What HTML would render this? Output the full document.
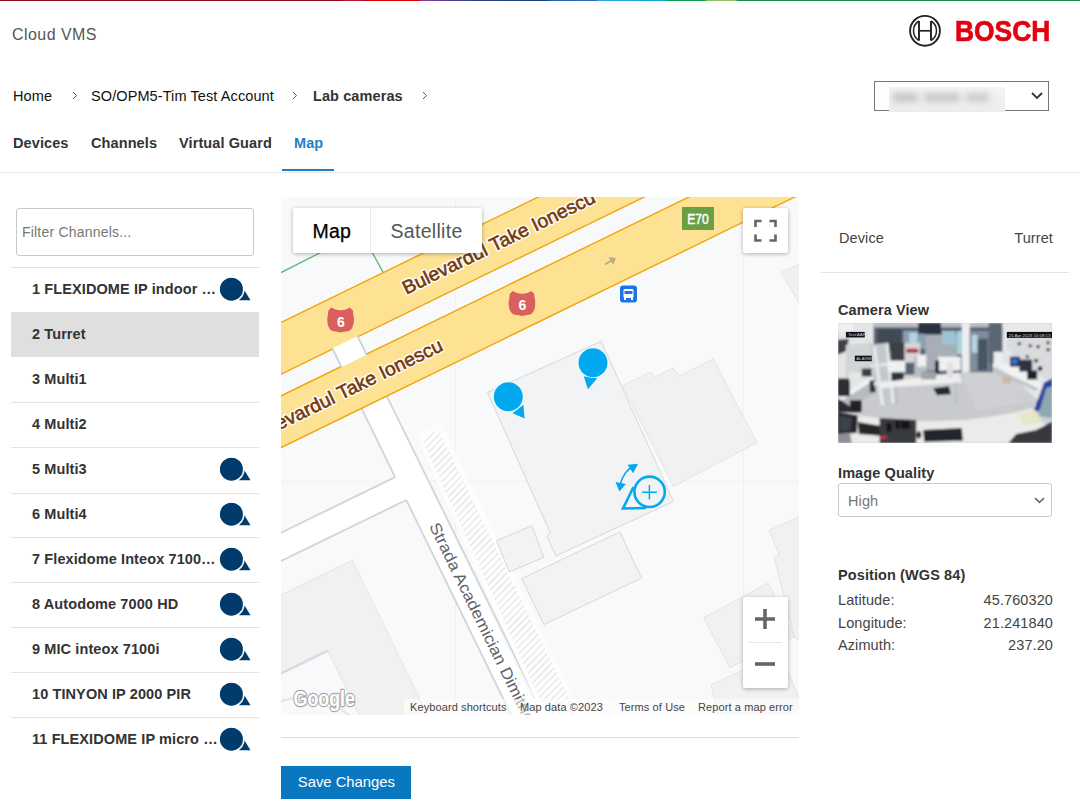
<!DOCTYPE html>
<html><head><meta charset="utf-8">
<style>
*{box-sizing:border-box;margin:0;padding:0}
html,body{width:1080px;height:811px;overflow:hidden;background:#fff;font-family:"Liberation Sans",sans-serif;color:#333;position:relative}
.abs{position:absolute;white-space:nowrap}
#topbar{position:absolute;left:0;top:0;width:1080px;height:1px;background:linear-gradient(90deg,#8a0b1d 0,#8a0b1d 342px,#b5162e 342px,#b5162e 363px,#a80c10 364px,#a80c10 367px,#d50005 368px,#d50005 419px,#8b3d98 421px,#4b3f92 450px,#27408c 480px,#173d80 546px,#2462ae 552px,#2a70b8 596px,#31a6dc 598px,#2aa6dc 636px,#0aa2d6 640px,#18a7d0 665px,#109a4c 668px,#109a4c 705px,#8fc65a 707px,#8fc65a 735px,#1d8d45 738px,#1d8d45 1080px)}
.crumb{font-size:14.5px;color:#111;top:88px;letter-spacing:0.1px}
.chev{position:absolute;width:6px;height:9px;top:91px}
.tab{font-size:14.5px;font-weight:bold;color:#333;top:135px;letter-spacing:0.1px}
#filter{position:absolute;left:16px;top:208px;width:238px;height:48px;border:1px solid #c8c8c8;border-radius:3px;font-size:14px;color:#777;padding:15px 0 0 5px;letter-spacing:0.2px}
.hl{position:absolute;left:11px;width:248px;height:1px;background:#e3e3e3}
.rt{position:absolute;left:32px;font-size:14.5px;font-weight:bold;color:#333;white-space:nowrap;letter-spacing:0.1px}
.ico{position:absolute;left:219px;width:32px;height:24px}
.lbl{position:absolute;font-size:14.5px;color:#444;white-space:nowrap;letter-spacing:0.1px}
.hd{position:absolute;font-size:14.5px;font-weight:bold;color:#333;white-space:nowrap;letter-spacing:0.1px}
.rv{position:absolute;right:27px;font-size:14.5px;color:#444;white-space:nowrap;letter-spacing:0.1px}
#map{position:absolute;left:281px;top:197px;width:518px;height:518px;overflow:hidden;background:#f8f9fa}
.mt{position:absolute;font-family:"Liberation Sans",sans-serif;white-space:nowrap}
.att{position:absolute;top:701px;font-size:11px;color:#444;white-space:nowrap}
</style></head>
<body>
<div id="topbar"></div>
<div class="abs" style="left:12px;top:26px;font-size:16px;color:#555;letter-spacing:0.45px">Cloud VMS</div>
<!-- bosch logo -->
<svg class="abs" style="left:905px;top:12px" width="40" height="40" viewBox="905 12 40 40">
<circle cx="925" cy="30.8" r="14.9" fill="none" stroke="#222" stroke-width="1.9"/>
<path d="M919 21 A11.5 11.5 0 0 0 919 40.6 M931 21 A11.5 11.5 0 0 1 931 40.6" fill="none" stroke="#222" stroke-width="1.5"/>
<path d="M919 21 V40.6 M931 21 V40.6" stroke="#222" stroke-width="1.9"/>
<path d="M919 30.8 H931" stroke="#222" stroke-width="1.7"/>
</svg>
<div class="abs" style="left:955px;top:13.5px;font-size:29.5px;font-weight:bold;color:#e3000f;transform:scaleX(0.895);transform-origin:0 0;-webkit-text-stroke:0.7px #e3000f">BOSCH</div>

<!-- breadcrumb -->
<div class="abs crumb" style="left:13px">Home</div>
<svg class="chev" style="left:72px"><polyline points="1,1 4.5,4.5 1,8" fill="none" stroke="#555" stroke-width="1"/></svg>
<div class="abs crumb" style="left:91px">SO/OPM5-Tim Test Account</div>
<svg class="chev" style="left:292px"><polyline points="1,1 4.5,4.5 1,8" fill="none" stroke="#555" stroke-width="1"/></svg>
<div class="abs crumb" style="left:313px;font-weight:bold;color:#333">Lab cameras</div>
<svg class="chev" style="left:422px"><polyline points="1,1 4.5,4.5 1,8" fill="none" stroke="#555" stroke-width="1"/></svg>

<!-- account select -->
<div class="abs" style="left:874px;top:81px;width:175px;height:30px;border:1px solid #777"></div>
<div class="abs" style="left:889px;top:87px;width:116px;height:25px;background:linear-gradient(180deg,#f4f4f4,#ececec)"></div>
<div class="abs" style="left:893px;top:93px;width:25px;height:9px;background:#c8c4c4;filter:blur(3px)"></div>
<div class="abs" style="left:924px;top:93px;width:36px;height:9px;background:#c5cac4;filter:blur(3px)"></div>
<div class="abs" style="left:966px;top:93px;width:23px;height:9px;background:#cbccd0;filter:blur(3px)"></div>
<svg class="abs" style="left:1030px;top:91px" width="14" height="10"><polyline points="2,2 7,7 12,2" fill="none" stroke="#333" stroke-width="1.8"/></svg>

<!-- tabs -->
<div class="abs tab" style="left:13px">Devices</div>
<div class="abs tab" style="left:91px">Channels</div>
<div class="abs tab" style="left:179px">Virtual Guard</div>
<div class="abs tab" style="left:294px;color:#1f7fc4">Map</div>
<div class="abs" style="left:282px;top:169px;width:52px;height:2px;background:#1f7fc4"></div>
<div class="abs" style="left:0;top:172px;width:1080px;height:1px;background:#e8e8e8"></div>

<!-- left list -->
<div id="filter">Filter Channels...</div>
<div class="abs" style="left:11px;top:312px;width:248px;height:45px;background:#dfdfdf"></div>
<div class="hl" style="top:267px"></div>
<div class="hl" style="top:402px"></div>
<div class="hl" style="top:447px"></div>
<div class="hl" style="top:493px"></div>
<div class="hl" style="top:537px"></div>
<div class="hl" style="top:582px"></div>
<div class="hl" style="top:627px"></div>
<div class="hl" style="top:672px"></div>
<div class="hl" style="top:717px"></div>
<div class="rt" style="top:281px">1 FLEXIDOME IP indoor …</div>
<div class="rt" style="top:326px">2 Turret</div>
<div class="rt" style="top:371px">3 Multi1</div>
<div class="rt" style="top:416px">4 Multi2</div>
<div class="rt" style="top:461px">5 Multi3</div>
<div class="rt" style="top:506px">6 Multi4</div>
<div class="rt" style="top:551px">7 Flexidome Inteox 7100…</div>
<div class="rt" style="top:596px">8 Autodome 7000 HD</div>
<div class="rt" style="top:641px">9 MIC inteox 7100i</div>
<div class="rt" style="top:686px">10 TINYON IP 2000 PIR</div>
<div class="rt" style="top:731px">11 FLEXIDOME IP micro …</div>
<svg class="abs" style="left:0;top:0" width="280" height="811">
<circle cx="231.4" cy="289.2" r="11.5" fill="#003b6b"/>
<polygon points="244.4,290.3 250.5,300.3 238.8,300.3" fill="#003b6b"/>
<circle cx="231.4" cy="289.2" r="12.6" fill="none" stroke="#fff" stroke-width="1.2"/>
<circle cx="231.4" cy="469.2" r="11.5" fill="#003b6b"/>
<polygon points="244.4,470.3 250.5,480.3 238.8,480.3" fill="#003b6b"/>
<circle cx="231.4" cy="469.2" r="12.6" fill="none" stroke="#fff" stroke-width="1.2"/>
<circle cx="231.4" cy="514.2" r="11.5" fill="#003b6b"/>
<polygon points="244.4,515.3 250.5,525.3 238.8,525.3" fill="#003b6b"/>
<circle cx="231.4" cy="514.2" r="12.6" fill="none" stroke="#fff" stroke-width="1.2"/>
<circle cx="231.4" cy="559.2" r="11.5" fill="#003b6b"/>
<polygon points="244.4,560.3 250.5,570.3 238.8,570.3" fill="#003b6b"/>
<circle cx="231.4" cy="559.2" r="12.6" fill="none" stroke="#fff" stroke-width="1.2"/>
<circle cx="231.4" cy="604.2" r="11.5" fill="#003b6b"/>
<polygon points="244.4,605.3 250.5,615.3 238.8,615.3" fill="#003b6b"/>
<circle cx="231.4" cy="604.2" r="12.6" fill="none" stroke="#fff" stroke-width="1.2"/>
<circle cx="231.4" cy="649.2" r="11.5" fill="#003b6b"/>
<polygon points="244.4,650.3 250.5,660.3 238.8,660.3" fill="#003b6b"/>
<circle cx="231.4" cy="649.2" r="12.6" fill="none" stroke="#fff" stroke-width="1.2"/>
<circle cx="231.4" cy="694.2" r="11.5" fill="#003b6b"/>
<polygon points="244.4,695.3 250.5,705.3 238.8,705.3" fill="#003b6b"/>
<circle cx="231.4" cy="694.2" r="12.6" fill="none" stroke="#fff" stroke-width="1.2"/>
<circle cx="231.4" cy="739.2" r="11.5" fill="#003b6b"/>
<polygon points="244.4,740.3 250.5,750.3 238.8,750.3" fill="#003b6b"/>
<circle cx="231.4" cy="739.2" r="12.6" fill="none" stroke="#fff" stroke-width="1.2"/>
</svg>

<!-- map -->
<div id="map">
<svg width="518" height="518" viewBox="281 197 518 518" style="position:absolute;left:0;top:0">
<rect x="281" y="197" width="518" height="518" fill="#f8f9fa"/>
<line x1="455.5" y1="197" x2="455.5" y2="715" stroke="#f0f1f3" stroke-width="1"/>
<line x1="281" y1="481.5" x2="799" y2="481.5" stroke="#f1f2f4" stroke-width="1"/>
<line x1="743.5" y1="197" x2="743.5" y2="715" stroke="#f0f1f3" stroke-width="1"/>
<polygon points="18.81000069746284,722.9178265015752 352.2625918744538,560.2821310428275 546.022638755226,957.5490995070593 212.57004757823506,1120.184794965807" fill="#f1f1f1" stroke="#e2e2e2" stroke-width="0.9"/>
<polygon points="49.36446962866154,785.5637715286272 327.54122695825373,649.8879015974077 490.74680490782725,984.5089250345875 212.57004757823506,1120.184794965807" fill="#f8f9fa" stroke="#e0e0e0" stroke-width="0.9"/>
<line x1="49.7" y1="786.3" x2="327.9" y2="650.6" stroke="#dadce0" stroke-width="2.6"/>
<path d="M281,701 Q320,690 350,716" fill="none" stroke="#e2e3e5" stroke-width="2"/>
<polygon points="-5.738783522725498,672.5853599088218 407.7064777748913,470.9346323858462 418.8849420180128,493.85388056647497 5.439680720395984,695.5046080894506" fill="#fff"/>
<line x1="-5.7" y1="672.6" x2="395.1" y2="477.1" stroke="#d2d4d8" stroke-width="1.8"/>
<line x1="5.4" y1="695.5" x2="406.3" y2="500.0" stroke="#d2d4d8" stroke-width="1.8"/>
<polygon points="359.1769270899986,403.37071664436155 384.3431603863753,391.0963245342674 635.0032493388435,914.1503559749406 613.4321922276636,924.6712634978785" fill="#fff"/>
<line x1="361.4" y1="407.9" x2="395.1" y2="477.1" stroke="#d2d4d8" stroke-width="1.8"/>
<line x1="406.3" y1="500.0" x2="613.4" y2="924.7" stroke="#d2d4d8" stroke-width="1.8"/>
<line x1="386.5" y1="395.6" x2="640.4" y2="911.5" stroke="#d2d4d8" stroke-width="1.8"/>
<defs><pattern id="hatch" patternUnits="userSpaceOnUse" width="20" height="5" patternTransform="rotate(-46)"><line x1="0" y1="2.5" x2="20" y2="2.5" stroke="#dfe0e2" stroke-width="1.1"/></pattern></defs>
<polygon points="417.4,435.8 440.6,424.4 581,715 543.3,715" fill="#fdfdfd" stroke="#fdfdfd" stroke-width="2" stroke-linejoin="round"/>
<polygon points="421.5,438 438.5,430 577,715 547,715" fill="url(#hatch)"/>
<polygon points="487.5,392.5 601.2,341.3 673.5,501.5 555.9,555.9 546.6,536 550.5,533.3" fill="#f1f3f4" stroke="#d4d4d4" stroke-width="0.9"/>
<polygon points="622.5,385.7 650.8,372.2 654.5,377.1 673,368 679.2,375.9 713.2,359.1 756.8,442.4 673.7,486.4" fill="#f1f1f1" stroke="#dedede" stroke-width="0.8"/>
<polygon points="496.5,540.7 531.9,525.8 543.9,557.3 509.3,571.9" fill="#f1f3f4" stroke="#d4d4d4" stroke-width="0.9"/>
<polygon points="521.8,578.6 619.8,532 641.6,578 543.9,624.6" fill="#f1f3f4" stroke="#d4d4d4" stroke-width="0.9"/>
<polygon points="781.5,272.3 800,264 800,305" fill="#f1f1f1" stroke="#dedede" stroke-width="0.8"/>
<polygon points="769,530.3 800,516.6 800,640 794.5,637.5 774.1,557.5 779.2,554.1" fill="#f1f1f1" stroke="#dedede" stroke-width="0.8"/>
<polygon points="703.6,617.8 768.3,583 794.5,636.9 729.8,667.5" fill="#f1f1f1" stroke="#dedede" stroke-width="0.8"/>
<polygon points="711,685.2 780,652 800,700 800,720 720,720" fill="#f1f1f1" stroke="#dedede" stroke-width="0.8"/>
<polyline points="281,272.6 361,232 383.8,273.6" fill="none" stroke="#5bb974" stroke-width="1.3"/>
<polygon points="-88.6,502.7 990.0,-23.3 1010.3,18.5 -68.2,544.5" fill="#fde293"/>
<line x1="-88.6" y1="502.7" x2="990.0" y2="-23.3" stroke="#f2a50c" stroke-width="1.4"/>
<line x1="-68.2" y1="544.5" x2="1010.3" y2="18.5" stroke="#f2a50c" stroke-width="1.4"/>
<polygon points="-59.7,562.0 1018.9,36.0 1039.3,77.8 -39.3,603.8" fill="#fde293"/>
<line x1="-59.7" y1="562.0" x2="1018.9" y2="36.0" stroke="#f2a50c" stroke-width="1.4"/>
<line x1="-39.3" y1="603.8" x2="1039.3" y2="77.8" stroke="#f2a50c" stroke-width="1.4"/>
<polygon points="332.2609386771493,348.1847622015927 357.42717197352596,335.9103700914985 366.7644774001333,355.05468327767073 341.59824410375666,367.32907538776493" fill="#fff"/>
<line x1="332.3" y1="348.2" x2="341.6" y2="367.3" stroke="#cdd0d4" stroke-width="1.8"/>
<line x1="357.4" y1="335.9" x2="366.8" y2="355.1" stroke="#cdd0d4" stroke-width="1.8"/>
<text x="406.3" y="294.7" transform="rotate(-26 406.3 294.7)" font-family="Liberation Sans" font-size="19" textLength="212" lengthAdjust="spacingAndGlyphs" fill="#fff" stroke="#fff" stroke-width="3.4" stroke-linejoin="round">Bulevardul Take Ionescu</text><text x="406.3" y="294.7" transform="rotate(-26 406.3 294.7)" font-family="Liberation Sans" font-size="19" textLength="212" lengthAdjust="spacingAndGlyphs" fill="#763a0e" stroke="#763a0e" stroke-width="0.6">Bulevardul Take Ionescu</text>
<text x="253.7" y="442.6" transform="rotate(-26 253.7 442.6)" font-family="Liberation Sans" font-size="19" textLength="212" lengthAdjust="spacingAndGlyphs" fill="#fff" stroke="#fff" stroke-width="3.4" stroke-linejoin="round">Bulevardul Take Ionescu</text><text x="253.7" y="442.6" transform="rotate(-26 253.7 442.6)" font-family="Liberation Sans" font-size="19" textLength="212" lengthAdjust="spacingAndGlyphs" fill="#763a0e" stroke="#763a0e" stroke-width="0.6">Bulevardul Take Ionescu</text>
<text x="429" y="526" transform="rotate(64 429 526)" font-family="Liberation Sans" font-size="16" fill="#5f6368" stroke="#fff" stroke-width="2" paint-order="stroke" textLength="220" lengthAdjust="spacingAndGlyphs">Strada Academician Dimitrie</text>
<g transform="translate(340.6 320)"><path d="M-12.3,-9.4 L-9.3,-12.4 Q-5,-9.5 0,-9.8 Q5,-9.5 9.3,-12.4 L12.3,-9.4 L12.5,-6.3 Q13.8,-2 13.2,2 Q12.5,9 8.3,11 Q3,11.5 0,12.5 Q-3,11.5 -8.3,11 Q-12.5,9 -13.2,2 Q-13.8,-2 -12.5,-6.3 Z" fill="#d9605e"/><text x="0.3" y="6.5" text-anchor="middle" font-family="Liberation Sans" font-weight="bold" font-size="14" fill="#fff">6</text></g>
<g transform="translate(522 303.5)"><path d="M-12.3,-9.4 L-9.3,-12.4 Q-5,-9.5 0,-9.8 Q5,-9.5 9.3,-12.4 L12.3,-9.4 L12.5,-6.3 Q13.8,-2 13.2,2 Q12.5,9 8.3,11 Q3,11.5 0,12.5 Q-3,11.5 -8.3,11 Q-12.5,9 -13.2,2 Q-13.8,-2 -12.5,-6.3 Z" fill="#d9605e"/><text x="0.3" y="6.5" text-anchor="middle" font-family="Liberation Sans" font-weight="bold" font-size="14" fill="#fff">6</text></g>
<rect x="682" y="207" width="32" height="23" fill="#6a9f43"/><text x="698" y="223.8" text-anchor="middle" font-family="Liberation Sans" font-size="14" fill="#fff" stroke="#fff" stroke-width="0.5" textLength="21.5" lengthAdjust="spacingAndGlyphs">E70</text>
<g transform="translate(610 261.5) rotate(-30)"><path d="M-6,0 L3,0" stroke="#b8ab8c" stroke-width="2"/><path d="M1,-4.5 L7,0 L1,4.5 Z" fill="#b8ab8c"/></g>
<rect x="620" y="285.5" width="17" height="17" rx="3" fill="#1a73e8"/><rect x="623.5" y="289" width="10" height="9" rx="1.5" fill="#fff"/><rect x="624.5" y="291" width="8" height="3" fill="#1a73e8"/><rect x="624" y="298" width="2" height="2" fill="#fff"/><rect x="631" y="298" width="2" height="2" fill="#fff"/>
<polygon points="512.4,413.2 524.7,418.4 523.4,404.8" fill="#03a9ee" stroke="#fff" stroke-width="1" paint-order="stroke"/><circle cx="508.3" cy="396.7" r="15.3" fill="#fff" opacity="0.8"/><circle cx="508.3" cy="396.7" r="14.5" fill="#03a9ee"/>
<polygon points="583.7,376.3 597.3,378.2 587.9,389.3" fill="#03a9ee" stroke="#fff" stroke-width="1" paint-order="stroke"/><circle cx="593" cy="362.7" r="15.3" fill="#fff" opacity="0.8"/><circle cx="593" cy="362.7" r="14.5" fill="#03a9ee"/>
<g fill="none" stroke="#03a9ee"><circle cx="649.6" cy="491.8" r="15.2" stroke-width="2.6"/><path d="M642 492.3 H657 M649.4 485 V499.6" stroke-width="1.5"/><path d="M633.5 487 L623 508.5 L646 508" stroke-width="2.6" stroke-linejoin="miter"/><path d="M620 485 Q624 470 634 466" stroke-width="1.5"/></g><polygon points="615.5,481.9 625.9,484.1 619.4,491.4" fill="#03a9ee"/><polygon points="627.6,464.7 638,463.8 633.2,473.3" fill="#03a9ee"/>
<text x="293.5" y="705.5" font-family="Liberation Sans" font-weight="bold" font-size="22" fill="#fff" stroke="#a8a8a8" stroke-width="2.4" stroke-linejoin="round" paint-order="stroke" textLength="61.5" lengthAdjust="spacingAndGlyphs">Google</text>
<rect x="404" y="699" width="395" height="16" fill="#fff" opacity="0.55"/>
</svg>
</div>

<!-- map controls -->
<div class="abs" style="left:293px;top:208px;width:189px;height:45px;background:#fff;border-radius:2px;box-shadow:0 1px 4px rgba(0,0,0,0.3)"></div>
<div class="abs" style="left:370px;top:208px;width:1px;height:45px;background:#ebebeb"></div>
<div class="abs" style="left:312.5px;top:220px;font-size:19.5px;color:#000;-webkit-text-stroke:0.25px #000;letter-spacing:0.2px">Map</div>
<div class="abs" style="left:390.5px;top:220px;font-size:19.5px;color:#565656;letter-spacing:0.3px">Satellite</div>
<div class="abs" style="left:743px;top:208px;width:45px;height:45px;background:#fff;border-radius:2px;box-shadow:0 1px 4px rgba(0,0,0,0.3)"></div>
<svg class="abs" style="left:743px;top:208px" width="45" height="45"><path d="M12.5 19 V13 H18.5 M26.5 13 H32.5 V19 M32.5 26.5 V32.5 H26.5 M18.5 32.5 H12.5 V26.5" fill="none" stroke="#666" stroke-width="2.6"/></svg>
<div class="abs" style="left:743px;top:597px;width:45px;height:91px;background:#fff;border-radius:2px;box-shadow:0 1px 4px rgba(0,0,0,0.3)"></div>
<div class="abs" style="left:748px;top:642px;width:34px;height:1px;background:#e6e6e6"></div>
<svg class="abs" style="left:743px;top:597px" width="45" height="91"><path d="M12 22 H32 M22 12 V32" stroke="#666" stroke-width="3.6"/><path d="M12 67 H32" stroke="#666" stroke-width="3.6"/></svg>
<div class="att" style="left:410px;letter-spacing:0.1px">Keyboard shortcuts</div>
<div class="att" style="left:520px;letter-spacing:0.1px">Map data ©2023</div>
<div class="att" style="left:619px;letter-spacing:0.1px">Terms of Use</div>
<div class="att" style="left:698px;letter-spacing:0.1px">Report a map error</div>
<div class="abs" style="left:281px;top:737px;width:518px;height:1px;background:#dcdcdc"></div>
<div class="abs" style="left:281px;top:766px;width:130px;height:33px;background:#0a78c0;color:#fff;font-size:14.8px;padding:8px 0 0 16.8px;letter-spacing:0">Save Changes</div>

<!-- right panel -->
<div class="lbl" style="left:839px;top:230px">Device</div>
<div class="rv" style="top:230px">Turret</div>
<div class="abs" style="left:821px;top:272px;width:248px;height:1px;background:#e3e3e3"></div>
<div class="hd" style="left:838px;top:302px">Camera View</div>
<div class="abs" style="left:838px;top:323px;width:214px;height:120px;background:#888;overflow:hidden"><svg width="214" height="120" viewBox="0 0 1080 606" preserveAspectRatio="none" style="display:block">
<defs><filter id="bl" x="0" y="0" width="1" height="1"><feGaussianBlur stdDeviation="4.5"/></filter></defs>
<rect width="1080" height="606" fill="#cfd0d3"/>
<g filter="url(#bl)">
<!-- back dark glass wall -->
<rect x="170" y="0" width="670" height="260" fill="#56616f"/>
<rect x="180" y="0" width="660" height="22" fill="#b9bfc6"/>
<rect x="200" y="30" width="120" height="110" fill="#3f4955"/>
<rect x="330" y="40" width="110" height="90" fill="#8ba2b4"/>
<rect x="360" y="50" width="40" height="50" fill="#b5d4e2"/>
<rect x="405" y="0" width="115" height="55" fill="#2c333c"/>
<rect x="440" y="60" width="160" height="180" fill="#a7aeb5"/>
<rect x="525" y="40" width="70" height="70" fill="#9ec4d6"/>
<rect x="600" y="40" width="25" height="120" fill="#a9d0e2"/>
<rect x="625" y="0" width="40" height="250" fill="#eceeef"/>
<rect x="665" y="40" width="100" height="205" fill="#7e8d9c"/>
<rect x="675" y="60" width="30" height="90" fill="#b9d3e0"/>
<rect x="705" y="80" width="50" height="160" fill="#4a5563"/>
<rect x="760" y="0" width="70" height="200" fill="#5b6673"/>
<!-- left wall -->
<polygon points="0,0 180,0 180,260 0,400" fill="#e3e5e7"/>
<rect x="0" y="0" width="75" height="40" fill="#f0f1f2"/>
<polygon points="0,85 55,80 45,140 0,160" fill="#3c4046"/>
<polygon points="40,110 180,100 180,230 40,280" fill="#d2d5d8"/>
<!-- right wall -->
<polygon points="830,0 1080,0 1080,450 830,230" fill="#e6e8ea"/>
<polygon points="850,70 1080,60 1080,300 850,180" fill="#d9dbde"/>
<circle cx="915" cy="105" r="9" fill="#333"/><circle cx="970" cy="115" r="9" fill="#444"/><circle cx="1010" cy="120" r="9" fill="#333"/><circle cx="1060" cy="100" r="9" fill="#444"/><circle cx="1060" cy="135" r="9" fill="#333"/><circle cx="1000" cy="190" r="10" fill="#2a2a2a"/><circle cx="955" cy="170" r="8" fill="#333"/><circle cx="1020" cy="230" r="12" fill="#222"/>
<!-- floor -->
<polygon points="90,420 220,330 620,250 790,250 1000,420 900,450 640,490 400,500 140,480" fill="#c9cacd"/>
<polygon points="620,250 790,250 960,400 700,440" fill="#cfd0d3"/>
<!-- left desk & equipment -->
<polygon points="0,380 170,270 180,290 0,405" fill="#f2f2f2"/>
<polygon points="0,405 180,290 180,360 60,420 0,440" fill="#b7babe"/>
<rect x="0" y="280" width="60" height="90" fill="#2a2d31"/>
<rect x="55" y="250" width="60" height="40" fill="#e6e6e6"/>
<rect x="120" y="230" width="50" height="40" fill="#3a3d42"/>
<rect x="160" y="290" width="40" height="60" fill="#2f3236"/>
<rect x="60" y="390" width="60" height="60" fill="#222428"/>
<!-- rack -->
<polygon points="160,110 255,100 290,410 200,420" fill="#c4c8cc"/>
<polygon points="175,120 190,118 235,415 215,417" fill="#e8eaec"/>
<polygon points="240,105 252,104 285,405 270,407" fill="#e8eaec"/>
<polygon points="165,210 260,200 262,215 167,225" fill="#e4e6e8"/>
<polygon points="180,300 270,290 272,305 182,315" fill="#e4e6e8"/>
<circle cx="235" cy="490" r="8" fill="#2a3a40"/><circle cx="292" cy="495" r="8" fill="#2a3a40"/>
<rect x="270" y="100" width="70" height="90" fill="#3b3f45"/>
<rect x="250" y="190" width="90" height="60" fill="#eef0f1"/>
<rect x="270" y="250" width="60" height="50" fill="#2e3137"/>
<rect x="335" y="100" width="80" height="100" fill="#d4d6d8"/>
<rect x="345" y="130" width="60" height="20" fill="#a33"/>
<rect x="385" y="170" width="60" height="110" fill="#b8bdc2"/>
<rect x="400" y="160" width="45" height="60" fill="#f0f1f2"/>
<!-- center desk -->
<polygon points="210,300 610,250 625,300 220,330" fill="#eeeeee"/>
<rect x="505" y="170" width="115" height="70" fill="#eef0f1"/>
<rect x="550" y="200" width="30" height="80" fill="#dfe1e3"/>
<rect x="420" y="245" width="75" height="40" fill="#9da4aa"/>
<rect x="290" y="320" width="12" height="90" fill="#bcc0c4"/>
<rect x="590" y="300" width="12" height="110" fill="#bcc0c4"/>
<polygon points="480,330 560,320 570,360 500,365" fill="#27292d"/>
<rect x="490" y="190" width="20" height="60" fill="#25272b"/>
<!-- right desk -->
<polygon points="780,210 830,150 860,140 1030,320 1010,330 780,220" fill="#f2f2f2"/>
<polygon points="780,220 1010,330 1000,345 780,250" fill="#c3c6c9"/>
<rect x="785" y="145" width="45" height="80" fill="#eceeef"/>
<rect x="830" y="150" width="40" height="60" fill="#e2e4e6"/>
<rect x="868" y="170" width="50" height="50" fill="#1f2d48"/>
<rect x="878" y="180" width="28" height="28" fill="#3b6fd8"/>
<rect x="915" y="185" width="65" height="60" fill="#2d3642"/>
<rect x="955" y="240" width="50" height="45" fill="#1f2125"/>
<rect x="830" y="270" width="40" height="35" fill="#c9b99a"/>
<!-- blue stripe -->
<polygon points="1040,300 1080,280 1080,360 1000,460 990,440" fill="#2a43a0"/>
<polygon points="1050,330 1080,320 1080,480 1010,470" fill="#8ea7b0"/>
<!-- front desk -->
<path d="M40,470 Q100,465 200,480 Q400,505 640,490 Q830,470 980,430 L1050,520 L1080,540 L1080,606 L0,606 L0,470 Z" fill="#ebebeb"/>
<polygon points="100,500 220,520 215,570 105,560" fill="#26282c"/>
<polygon points="210,480 395,490 395,606 210,606" fill="#393a3d"/>
<rect x="245" y="505" width="25" height="45" fill="#121212"/><rect x="290" y="490" width="22" height="45" fill="#121212"/><rect x="318" y="490" width="22" height="45" fill="#121212"/><rect x="340" y="490" width="22" height="45" fill="#121212"/>
<rect x="215" y="570" width="30" height="15" fill="#c33"/>
<polygon points="430,540 625,530 630,595 435,600" fill="#24262a"/>
<ellipse cx="408" cy="565" rx="12" ry="18" fill="#222"/>
<polygon points="0,380 60,420 70,450 0,450" fill="#2a2c30"/>
<polygon points="0,450 100,470 95,555 0,560" fill="#26282c"/>
<polygon points="10,470 70,480 65,540 10,545" fill="#3d434a"/>
<polygon points="0,560 60,555 70,606 0,606" fill="#8c9096"/>
<polygon points="860,606 900,560 1000,540 1080,500 1080,606" fill="#37383c"/>
<polygon points="910,460 1000,440 1030,500 940,520" fill="#e4e8c4"/>
</g>
<rect x="40" y="45" width="95" height="28" fill="#111"/>
<rect x="85" y="165" width="85" height="28" fill="#111"/>
<rect x="852" y="45" width="228" height="30" fill="#111"/>
<g fill="#cfcfcf" font-family="Liberation Sans" font-size="22"><text x="50" y="68">Test AAPI</text><text x="92" y="188">ALARM</text><text x="862" y="69">25 Apr 2023   10:08:13</text></g>
</svg></div>
<div class="hd" style="left:838px;top:465px">Image Quality</div>
<div class="abs" style="left:838px;top:483px;width:214px;height:34px;border:1px solid #c8c8c8;border-radius:3px"></div>
<div class="lbl" style="left:848px;top:493px;color:#777">High</div>
<svg class="abs" style="left:1032.7px;top:495.5px" width="14" height="10"><polyline points="2,2 6.5,6.3 11,2" fill="none" stroke="#6a6a6a" stroke-width="1.7"/></svg>
<div class="hd" style="left:838px;top:567px">Position (WGS 84)</div>
<div class="lbl" style="left:838px;top:592px">Latitude:</div>
<div class="rv" style="top:592px">45.760320</div>
<div class="lbl" style="left:838px;top:615px">Longitude:</div>
<div class="rv" style="top:615px">21.241840</div>
<div class="lbl" style="left:838px;top:637px">Azimuth:</div>
<div class="rv" style="top:637px">237.20</div>
</body></html>
